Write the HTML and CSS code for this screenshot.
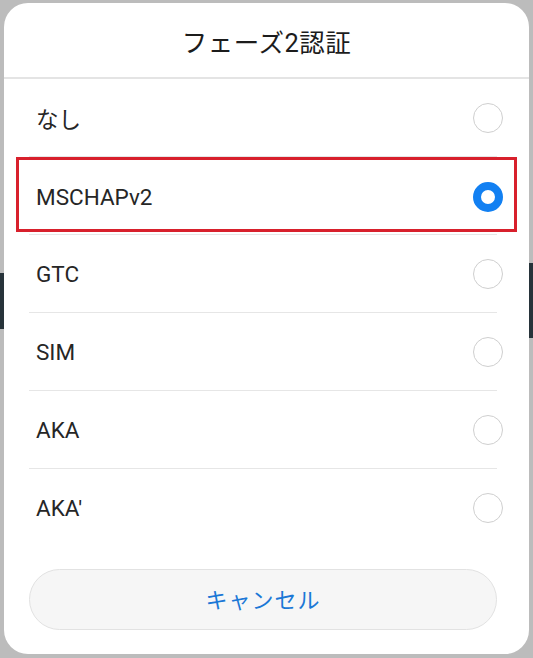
FILE: index.html
```html
<!DOCTYPE html>
<html lang="ja">
<head>
<meta charset="utf-8">
<link rel="stylesheet" href="styles.css">
</head>
<body>
<div class="backdrop">
  <div class="band left"></div>
  <div class="band right"></div>
</div>
<div class="dialog">
  <div class="header">フェーズ2認証</div>
  <div class="list">
    <div class="row"><span class="label">なし</span><span class="radio"></span></div>
    <div class="divider"></div>
    <div class="row selected-row"><span class="label">MSCHAPv2</span><span class="radio on"></span><span class="highlight"></span></div>
    <div class="divider"></div>
    <div class="row"><span class="label">GTC</span><span class="radio"></span></div>
    <div class="divider"></div>
    <div class="row"><span class="label">SIM</span><span class="radio"></span></div>
    <div class="divider"></div>
    <div class="row"><span class="label">AKA</span><span class="radio"></span></div>
    <div class="divider"></div>
    <div class="row"><span class="label">AKA'</span><span class="radio"></span></div>
  </div>
  <div class="actions">
    <button class="cancel">キャンセル</button>
  </div>
</div>
</body>
</html>
```

FILE: styles.css
```css
* { box-sizing: border-box; }
html, body {
  margin: 0;
  padding: 0;
  width: 533px;
  height: 658px;
  overflow: hidden;
}
body {
  background: #bcbcbc;
  font-family: Roboto, "Noto Sans CJK JP", sans-serif;
  position: relative;
  padding: 3px 4px 0 4px;
}
.backdrop {
  position: absolute;
  left: 0;
  top: 0;
  width: 533px;
  height: 658px;
}
.band {
  position: absolute;
  background: #27333a;
}
.band.left {
  left: 0;
  width: 20px;
  top: 273px;
  height: 56px;
}
.band.right {
  right: 0;
  width: 20px;
  top: 263px;
  height: 75px;
}
.dialog {
  position: relative;
  width: 525px;
  height: 651px;
  background: #ffffff;
  border-radius: 24px;
  display: flex;
  flex-direction: column;
}
.header {
  height: 76px;
  border-bottom: 2px solid #e4e4e4;
  display: flex;
  align-items: center;
  justify-content: center;
  font-size: 25.5px;
  color: #1c1c1c;
  padding-top: 1px;
  letter-spacing: 0.5px;
}
.list {
  display: flex;
  flex-direction: column;
}
.row {
  position: relative;
  height: 77px;
  display: flex;
  align-items: center;
  justify-content: space-between;
  padding: 0 26px 0 32px;
}
.label {
  font-size: 22.5px;
  color: #262626;
}
.radio {
  width: 30px;
  height: 30px;
  border-radius: 50%;
  border: 1.5px solid #cfcfcf;
}
.radio.on {
  border: 8.5px solid #1280f2;
}
.selected-row .label, .selected-row .radio { margin-top: 3px; }
.highlight {
  position: absolute;
  left: 12px;
  right: 12px;
  top: 0;
  height: 75px;
  border: 3px solid #d8202c;
}
.divider {
  height: 1px;
  background: #e6e6e6;
  margin: 0 32px 0 25px;
}
.actions {
  padding: 23px 32px 0 25px;
}
.cancel {
  width: 100%;
  height: 61px;
  border-radius: 31px;
  background: #f6f6f6;
  border: 1px solid #e2e2e2;
  color: #1b78d6;
  font-family: Roboto, "Noto Sans CJK JP", sans-serif;
  font-size: 22px;
  letter-spacing: 1px;
  padding: 0 0 3px 0;
}
```
